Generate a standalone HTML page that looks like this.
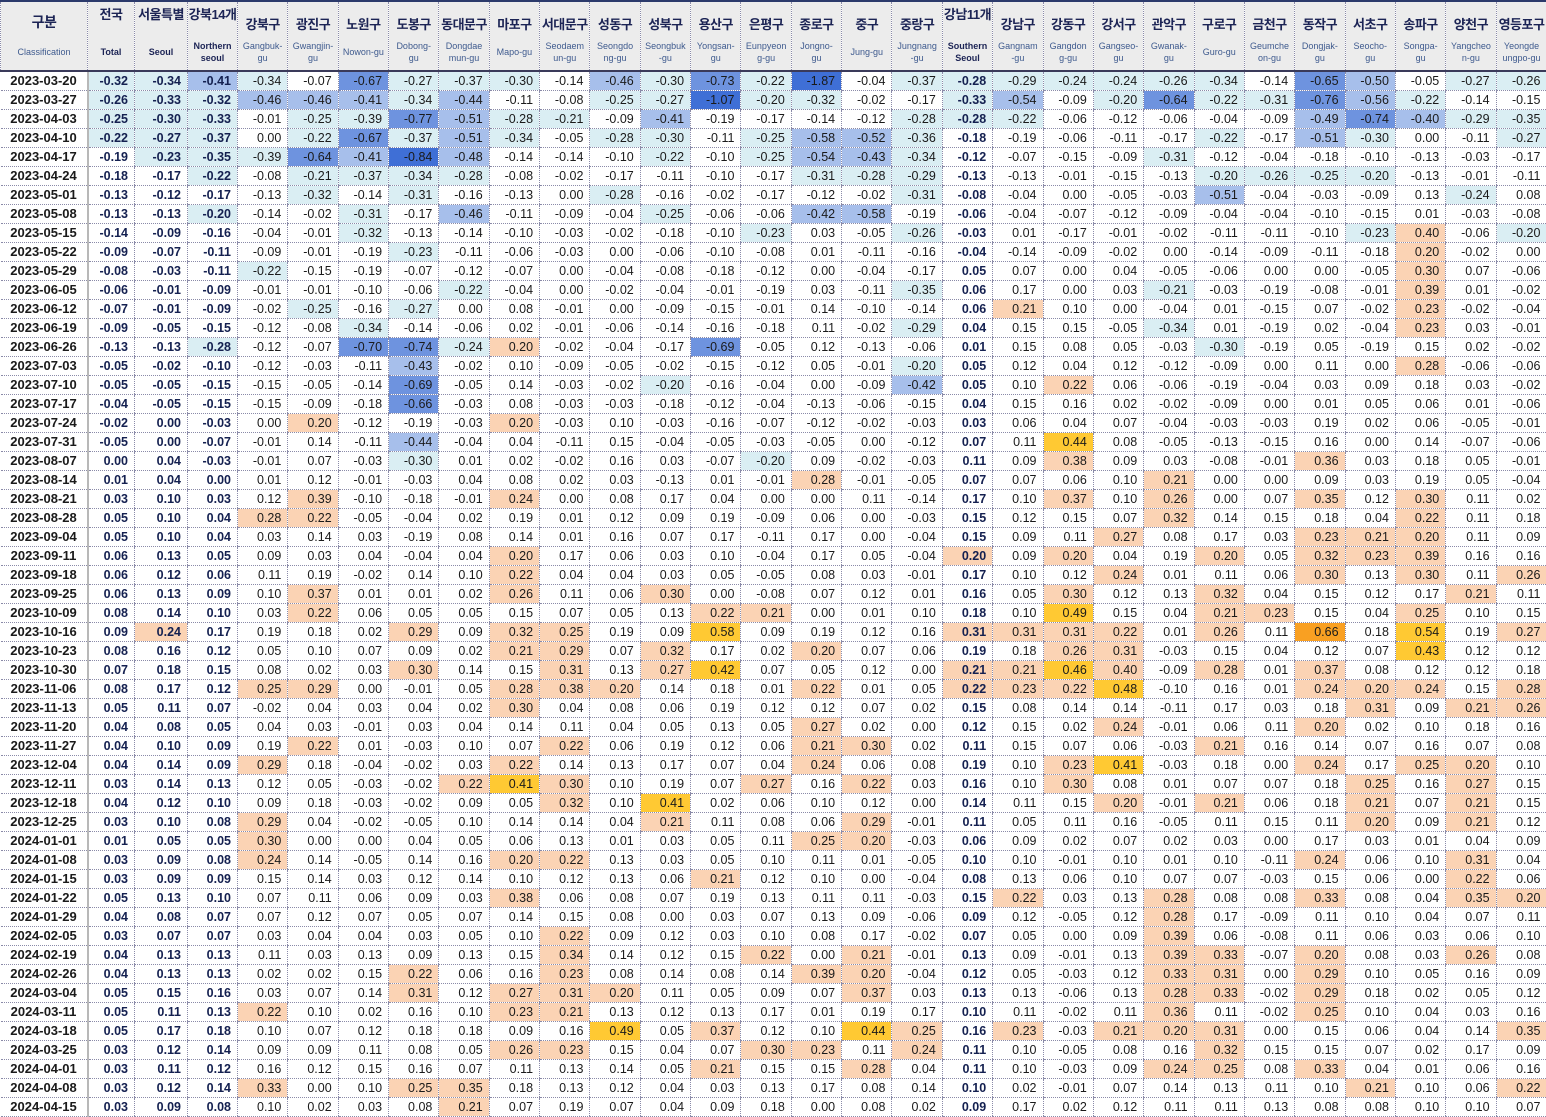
<!DOCTYPE html>
<html><head><meta charset="utf-8">
<style>
html,body{margin:0;padding:0;background:#fff;}
body{width:1546px;height:1116px;overflow:hidden;}
table{border-collapse:collapse;table-layout:fixed;width:1546px;font-family:"Liberation Sans","Noto Sans CJK KR",sans-serif;}
th{background:#ececec;height:68px;padding:0;vertical-align:top;border-left:1px dotted #8a8aa8;border-top:2px solid #2b3a6b;border-bottom:2px solid #3a3a5a;position:relative;}
th .k{font-size:13px;font-weight:bold;color:#1c2455;white-space:nowrap;overflow:hidden;letter-spacing:-0.5px;}
th .e{position:absolute;left:0;right:0;top:36px;height:28px;display:flex;align-items:center;justify-content:center;font-size:9px;line-height:12px;color:#3e5a8e;font-weight:normal;}
th.t .k{margin-top:2px;}
th.d .k{margin-top:12px;}
th.t .e{color:#1c2455;font-weight:bold;}
th:first-child .k{font-size:14px;margin-top:10px;}
th:first-child .e{font-weight:normal;color:#3e5a8e;}
td{height:18px;padding:0 6px 0 0;text-align:right;font-size:12.5px;color:#1a1a1a;border-left:1px dotted #8a8aa8;border-bottom:1px dotted #8a8aa8;white-space:nowrap;overflow:hidden;line-height:18px;}
td.dt{font-weight:bold;text-align:center;padding:0;font-size:13px;color:#1a1a1a;border-right:2px solid #b8b8b8;border-left:none;}
td.b{font-weight:bold;color:#142050;}
</style></head><body>
<table id="t">
<colgroup><col style="width:87px"><col style="width:47px"><col style="width:53px"><col style="width:50px">
<col span="26" style="width:50.35px"></colgroup>
<thead><tr>
<th><div class="k">구분</div><div class="e">Classification</div></th>
<th class="t"><div class="k">전국</div><div class="e">Total</div></th>
<th class="t"><div class="k">서울특별</div><div class="e">Seoul</div></th>
<th class="t"><div class="k">강북14개</div><div class="e">Northern<br>seoul</div></th>
<th class="d"><div class="k">강북구</div><div class="e">Gangbuk-<br>gu</div></th>
<th class="d"><div class="k">광진구</div><div class="e">Gwangjin-<br>gu</div></th>
<th class="d"><div class="k">노원구</div><div class="e">Nowon-gu</div></th>
<th class="d"><div class="k">도봉구</div><div class="e">Dobong-<br>gu</div></th>
<th class="d"><div class="k">동대문구</div><div class="e">Dongdae<br>mun-gu</div></th>
<th class="d"><div class="k">마포구</div><div class="e">Mapo-gu</div></th>
<th class="d"><div class="k">서대문구</div><div class="e">Seodaem<br>un-gu</div></th>
<th class="d"><div class="k">성동구</div><div class="e">Seongdo<br>ng-gu</div></th>
<th class="d"><div class="k">성북구</div><div class="e">Seongbuk<br>-gu</div></th>
<th class="d"><div class="k">용산구</div><div class="e">Yongsan-<br>gu</div></th>
<th class="d"><div class="k">은평구</div><div class="e">Eunpyeon<br>g-gu</div></th>
<th class="d"><div class="k">종로구</div><div class="e">Jongno-<br>gu</div></th>
<th class="d"><div class="k">중구</div><div class="e">Jung-gu</div></th>
<th class="d"><div class="k">중랑구</div><div class="e">Jungnang<br>-gu</div></th>
<th class="t"><div class="k">강남11개</div><div class="e">Southern<br>Seoul</div></th>
<th class="d"><div class="k">강남구</div><div class="e">Gangnam<br>-gu</div></th>
<th class="d"><div class="k">강동구</div><div class="e">Gangdon<br>g-gu</div></th>
<th class="d"><div class="k">강서구</div><div class="e">Gangseo-<br>gu</div></th>
<th class="d"><div class="k">관악구</div><div class="e">Gwanak-<br>gu</div></th>
<th class="d"><div class="k">구로구</div><div class="e">Guro-gu</div></th>
<th class="d"><div class="k">금천구</div><div class="e">Geumche<br>on-gu</div></th>
<th class="d"><div class="k">동작구</div><div class="e">Dongjak-<br>gu</div></th>
<th class="d"><div class="k">서초구</div><div class="e">Seocho-<br>gu</div></th>
<th class="d"><div class="k">송파구</div><div class="e">Songpa-<br>gu</div></th>
<th class="d"><div class="k">양천구</div><div class="e">Yangcheo<br>n-gu</div></th>
<th class="d"><div class="k">영등포구</div><div class="e">Yeongde<br>ungpo-gu</div></th>
</tr></thead>
<tbody>
<tr><td>2023-03-20<td>-0.32<td>-0.34<td>-0.41<td>-0.34<td>-0.07<td>-0.67<td>-0.27<td>-0.37<td>-0.30<td>-0.14<td>-0.46<td>-0.30<td>-0.73<td>-0.22<td>-1.87<td>-0.04<td>-0.37<td>-0.28<td>-0.29<td>-0.24<td>-0.24<td>-0.26<td>-0.34<td>-0.14<td>-0.65<td>-0.50<td>-0.05<td>-0.27<td>-0.26
<tr><td>2023-03-27<td>-0.26<td>-0.33<td>-0.32<td>-0.46<td>-0.46<td>-0.41<td>-0.34<td>-0.44<td>-0.11<td>-0.08<td>-0.25<td>-0.27<td>-1.07<td>-0.20<td>-0.32<td>-0.02<td>-0.17<td>-0.33<td>-0.54<td>-0.09<td>-0.20<td>-0.64<td>-0.22<td>-0.31<td>-0.76<td>-0.56<td>-0.22<td>-0.14<td>-0.15
<tr><td>2023-04-03<td>-0.25<td>-0.30<td>-0.33<td>-0.01<td>-0.25<td>-0.39<td>-0.77<td>-0.51<td>-0.28<td>-0.21<td>-0.09<td>-0.41<td>-0.19<td>-0.17<td>-0.14<td>-0.12<td>-0.28<td>-0.28<td>-0.22<td>-0.06<td>-0.12<td>-0.06<td>-0.04<td>-0.09<td>-0.49<td>-0.74<td>-0.40<td>-0.29<td>-0.35
<tr><td>2023-04-10<td>-0.22<td>-0.27<td>-0.37<td>0.00<td>-0.22<td>-0.67<td>-0.37<td>-0.51<td>-0.34<td>-0.05<td>-0.28<td>-0.30<td>-0.11<td>-0.25<td>-0.58<td>-0.52<td>-0.36<td>-0.18<td>-0.19<td>-0.06<td>-0.11<td>-0.17<td>-0.22<td>-0.17<td>-0.51<td>-0.30<td>0.00<td>-0.11<td>-0.27
<tr><td>2023-04-17<td>-0.19<td>-0.23<td>-0.35<td>-0.39<td>-0.64<td>-0.41<td>-0.84<td>-0.48<td>-0.14<td>-0.14<td>-0.10<td>-0.22<td>-0.10<td>-0.25<td>-0.54<td>-0.43<td>-0.34<td>-0.12<td>-0.07<td>-0.15<td>-0.09<td>-0.31<td>-0.12<td>-0.04<td>-0.18<td>-0.10<td>-0.13<td>-0.03<td>-0.17
<tr><td>2023-04-24<td>-0.18<td>-0.17<td>-0.22<td>-0.08<td>-0.21<td>-0.37<td>-0.34<td>-0.28<td>-0.08<td>-0.02<td>-0.17<td>-0.11<td>-0.10<td>-0.17<td>-0.31<td>-0.28<td>-0.29<td>-0.13<td>-0.13<td>-0.01<td>-0.15<td>-0.13<td>-0.20<td>-0.26<td>-0.25<td>-0.20<td>-0.13<td>-0.01<td>-0.11
<tr><td>2023-05-01<td>-0.13<td>-0.12<td>-0.17<td>-0.13<td>-0.32<td>-0.14<td>-0.31<td>-0.16<td>-0.13<td>0.00<td>-0.28<td>-0.16<td>-0.02<td>-0.17<td>-0.12<td>-0.02<td>-0.31<td>-0.08<td>-0.04<td>0.00<td>-0.05<td>-0.03<td>-0.51<td>-0.04<td>-0.03<td>-0.09<td>0.13<td>-0.24<td>0.08
<tr><td>2023-05-08<td>-0.13<td>-0.13<td>-0.20<td>-0.14<td>-0.02<td>-0.31<td>-0.17<td>-0.46<td>-0.11<td>-0.09<td>-0.04<td>-0.25<td>-0.06<td>-0.06<td>-0.42<td>-0.58<td>-0.19<td>-0.06<td>-0.04<td>-0.07<td>-0.12<td>-0.09<td>-0.04<td>-0.04<td>-0.10<td>-0.15<td>0.01<td>-0.03<td>-0.08
<tr><td>2023-05-15<td>-0.14<td>-0.09<td>-0.16<td>-0.04<td>-0.01<td>-0.32<td>-0.13<td>-0.14<td>-0.10<td>-0.03<td>-0.02<td>-0.18<td>-0.10<td>-0.23<td>0.03<td>-0.05<td>-0.26<td>-0.03<td>0.01<td>-0.17<td>-0.01<td>-0.02<td>-0.11<td>-0.11<td>-0.10<td>-0.23<td>0.40<td>-0.06<td>-0.20
<tr><td>2023-05-22<td>-0.09<td>-0.07<td>-0.11<td>-0.09<td>-0.01<td>-0.19<td>-0.23<td>-0.11<td>-0.06<td>-0.03<td>0.00<td>-0.06<td>-0.10<td>-0.08<td>0.01<td>-0.11<td>-0.16<td>-0.04<td>-0.14<td>-0.09<td>-0.02<td>0.00<td>-0.14<td>-0.09<td>-0.11<td>-0.18<td>0.20<td>-0.02<td>0.00
<tr><td>2023-05-29<td>-0.08<td>-0.03<td>-0.11<td>-0.22<td>-0.15<td>-0.19<td>-0.07<td>-0.12<td>-0.07<td>0.00<td>-0.04<td>-0.08<td>-0.18<td>-0.12<td>0.00<td>-0.04<td>-0.17<td>0.05<td>0.07<td>0.00<td>0.04<td>-0.05<td>-0.06<td>0.00<td>0.00<td>-0.05<td>0.30<td>0.07<td>-0.06
<tr><td>2023-06-05<td>-0.06<td>-0.01<td>-0.09<td>-0.01<td>-0.01<td>-0.10<td>-0.06<td>-0.22<td>-0.04<td>0.00<td>-0.02<td>-0.04<td>-0.01<td>-0.19<td>0.03<td>-0.11<td>-0.35<td>0.06<td>0.17<td>0.00<td>0.03<td>-0.21<td>-0.03<td>-0.19<td>-0.08<td>-0.01<td>0.39<td>0.01<td>-0.02
<tr><td>2023-06-12<td>-0.07<td>-0.01<td>-0.09<td>-0.02<td>-0.25<td>-0.16<td>-0.27<td>0.00<td>0.08<td>-0.01<td>0.00<td>-0.09<td>-0.15<td>-0.01<td>0.14<td>-0.10<td>-0.14<td>0.06<td>0.21<td>0.10<td>0.00<td>-0.04<td>0.01<td>-0.15<td>0.07<td>-0.02<td>0.23<td>-0.02<td>-0.04
<tr><td>2023-06-19<td>-0.09<td>-0.05<td>-0.15<td>-0.12<td>-0.08<td>-0.34<td>-0.14<td>-0.06<td>0.02<td>-0.01<td>-0.06<td>-0.14<td>-0.16<td>-0.18<td>0.11<td>-0.02<td>-0.29<td>0.04<td>0.15<td>0.15<td>-0.05<td>-0.34<td>0.01<td>-0.19<td>0.02<td>-0.04<td>0.23<td>0.03<td>-0.01
<tr><td>2023-06-26<td>-0.13<td>-0.13<td>-0.28<td>-0.12<td>-0.07<td>-0.70<td>-0.74<td>-0.24<td>0.20<td>-0.02<td>-0.04<td>-0.17<td>-0.69<td>-0.05<td>0.12<td>-0.13<td>-0.06<td>0.01<td>0.15<td>0.08<td>0.05<td>-0.03<td>-0.30<td>-0.19<td>0.05<td>-0.19<td>0.15<td>0.02<td>-0.02
<tr><td>2023-07-03<td>-0.05<td>-0.02<td>-0.10<td>-0.12<td>-0.03<td>-0.11<td>-0.43<td>-0.02<td>0.10<td>-0.09<td>-0.05<td>-0.02<td>-0.15<td>-0.12<td>0.05<td>-0.01<td>-0.20<td>0.05<td>0.12<td>0.04<td>0.12<td>-0.12<td>-0.09<td>0.00<td>0.11<td>0.00<td>0.28<td>-0.06<td>-0.06
<tr><td>2023-07-10<td>-0.05<td>-0.05<td>-0.15<td>-0.15<td>-0.05<td>-0.14<td>-0.69<td>-0.05<td>0.14<td>-0.03<td>-0.02<td>-0.20<td>-0.16<td>-0.04<td>0.00<td>-0.09<td>-0.42<td>0.05<td>0.10<td>0.22<td>0.06<td>-0.06<td>-0.19<td>-0.04<td>0.03<td>0.09<td>0.18<td>0.03<td>-0.02
<tr><td>2023-07-17<td>-0.04<td>-0.05<td>-0.15<td>-0.15<td>-0.09<td>-0.18<td>-0.66<td>-0.03<td>0.08<td>-0.03<td>-0.03<td>-0.18<td>-0.12<td>-0.04<td>-0.13<td>-0.06<td>-0.15<td>0.04<td>0.15<td>0.16<td>0.02<td>-0.02<td>-0.09<td>0.00<td>0.01<td>0.05<td>0.06<td>0.01<td>-0.06
<tr><td>2023-07-24<td>-0.02<td>0.00<td>-0.03<td>0.00<td>0.20<td>-0.12<td>-0.19<td>-0.03<td>0.20<td>-0.03<td>0.10<td>-0.03<td>-0.16<td>-0.07<td>-0.12<td>-0.02<td>-0.03<td>0.03<td>0.06<td>0.04<td>0.07<td>-0.04<td>-0.03<td>-0.03<td>0.19<td>0.02<td>0.06<td>-0.05<td>-0.01
<tr><td>2023-07-31<td>-0.05<td>0.00<td>-0.07<td>-0.01<td>0.14<td>-0.11<td>-0.44<td>-0.04<td>0.04<td>-0.11<td>0.15<td>-0.04<td>-0.05<td>-0.03<td>-0.05<td>0.00<td>-0.12<td>0.07<td>0.11<td>0.44<td>0.08<td>-0.05<td>-0.13<td>-0.15<td>0.16<td>0.00<td>0.14<td>-0.07<td>-0.06
<tr><td>2023-08-07<td>0.00<td>0.04<td>-0.03<td>-0.01<td>0.07<td>-0.03<td>-0.30<td>0.01<td>0.02<td>-0.02<td>0.16<td>0.03<td>-0.07<td>-0.20<td>0.09<td>-0.02<td>-0.03<td>0.11<td>0.09<td>0.38<td>0.09<td>0.03<td>-0.08<td>-0.01<td>0.36<td>0.03<td>0.18<td>0.05<td>-0.01
<tr><td>2023-08-14<td>0.01<td>0.04<td>0.00<td>0.01<td>0.12<td>-0.01<td>-0.03<td>0.04<td>0.08<td>0.02<td>0.03<td>-0.13<td>0.01<td>-0.01<td>0.28<td>-0.01<td>-0.05<td>0.07<td>0.07<td>0.06<td>0.10<td>0.21<td>0.00<td>0.00<td>0.09<td>0.03<td>0.19<td>0.05<td>-0.04
<tr><td>2023-08-21<td>0.03<td>0.10<td>0.03<td>0.12<td>0.39<td>-0.10<td>-0.18<td>-0.01<td>0.24<td>0.00<td>0.08<td>0.17<td>0.04<td>0.00<td>0.00<td>0.11<td>-0.14<td>0.17<td>0.10<td>0.37<td>0.10<td>0.26<td>0.00<td>0.07<td>0.35<td>0.12<td>0.30<td>0.11<td>0.02
<tr><td>2023-08-28<td>0.05<td>0.10<td>0.04<td>0.28<td>0.22<td>-0.05<td>-0.04<td>0.02<td>0.19<td>0.01<td>0.12<td>0.09<td>0.19<td>-0.09<td>0.06<td>0.00<td>-0.03<td>0.15<td>0.12<td>0.15<td>0.07<td>0.32<td>0.14<td>0.15<td>0.18<td>0.04<td>0.22<td>0.11<td>0.18
<tr><td>2023-09-04<td>0.05<td>0.10<td>0.04<td>0.03<td>0.14<td>0.03<td>-0.19<td>0.08<td>0.14<td>0.01<td>0.16<td>0.07<td>0.17<td>-0.11<td>0.17<td>0.00<td>-0.04<td>0.15<td>0.09<td>0.11<td>0.27<td>0.08<td>0.17<td>0.03<td>0.23<td>0.21<td>0.20<td>0.11<td>0.09
<tr><td>2023-09-11<td>0.06<td>0.13<td>0.05<td>0.09<td>0.03<td>0.04<td>-0.04<td>0.04<td>0.20<td>0.17<td>0.06<td>0.03<td>0.10<td>-0.04<td>0.17<td>0.05<td>-0.04<td>0.20<td>0.09<td>0.20<td>0.04<td>0.19<td>0.20<td>0.05<td>0.32<td>0.23<td>0.39<td>0.16<td>0.16
<tr><td>2023-09-18<td>0.06<td>0.12<td>0.06<td>0.11<td>0.19<td>-0.02<td>0.14<td>0.10<td>0.22<td>0.04<td>0.04<td>0.03<td>0.05<td>-0.05<td>0.08<td>0.03<td>-0.01<td>0.17<td>0.10<td>0.12<td>0.24<td>0.01<td>0.11<td>0.06<td>0.30<td>0.13<td>0.30<td>0.11<td>0.26
<tr><td>2023-09-25<td>0.06<td>0.13<td>0.09<td>0.10<td>0.37<td>0.01<td>0.01<td>0.02<td>0.26<td>0.11<td>0.06<td>0.30<td>0.00<td>-0.08<td>0.07<td>0.12<td>0.01<td>0.16<td>0.05<td>0.30<td>0.12<td>0.13<td>0.32<td>0.04<td>0.15<td>0.12<td>0.17<td>0.21<td>0.11
<tr><td>2023-10-09<td>0.08<td>0.14<td>0.10<td>0.03<td>0.22<td>0.06<td>0.05<td>0.05<td>0.15<td>0.07<td>0.05<td>0.13<td>0.22<td>0.21<td>0.00<td>0.01<td>0.10<td>0.18<td>0.10<td>0.49<td>0.15<td>0.04<td>0.21<td>0.23<td>0.15<td>0.04<td>0.25<td>0.10<td>0.15
<tr><td>2023-10-16<td>0.09<td>0.24<td>0.17<td>0.19<td>0.18<td>0.02<td>0.29<td>0.09<td>0.32<td>0.25<td>0.19<td>0.09<td>0.58<td>0.09<td>0.19<td>0.12<td>0.16<td>0.31<td>0.31<td>0.31<td>0.22<td>0.01<td>0.26<td>0.11<td>0.66<td>0.18<td>0.54<td>0.19<td>0.27
<tr><td>2023-10-23<td>0.08<td>0.16<td>0.12<td>0.05<td>0.10<td>0.07<td>0.09<td>0.02<td>0.21<td>0.29<td>0.07<td>0.32<td>0.17<td>0.02<td>0.20<td>0.07<td>0.06<td>0.19<td>0.18<td>0.26<td>0.31<td>-0.03<td>0.15<td>0.04<td>0.12<td>0.07<td>0.43<td>0.12<td>0.12
<tr><td>2023-10-30<td>0.07<td>0.18<td>0.15<td>0.08<td>0.02<td>0.03<td>0.30<td>0.14<td>0.15<td>0.31<td>0.13<td>0.27<td>0.42<td>0.07<td>0.05<td>0.12<td>0.00<td>0.21<td>0.21<td>0.46<td>0.40<td>-0.09<td>0.28<td>0.01<td>0.37<td>0.08<td>0.12<td>0.12<td>0.18
<tr><td>2023-11-06<td>0.08<td>0.17<td>0.12<td>0.25<td>0.29<td>0.00<td>-0.01<td>0.05<td>0.28<td>0.38<td>0.20<td>0.14<td>0.18<td>0.01<td>0.22<td>0.01<td>0.05<td>0.22<td>0.23<td>0.22<td>0.48<td>-0.10<td>0.16<td>0.01<td>0.24<td>0.20<td>0.24<td>0.15<td>0.28
<tr><td>2023-11-13<td>0.05<td>0.11<td>0.07<td>-0.02<td>0.04<td>0.03<td>0.04<td>0.02<td>0.30<td>0.04<td>0.08<td>0.06<td>0.19<td>0.12<td>0.12<td>0.07<td>0.02<td>0.15<td>0.08<td>0.14<td>0.14<td>-0.11<td>0.17<td>0.03<td>0.18<td>0.31<td>0.09<td>0.21<td>0.26
<tr><td>2023-11-20<td>0.04<td>0.08<td>0.05<td>0.04<td>0.03<td>-0.01<td>0.03<td>0.04<td>0.14<td>0.11<td>0.04<td>0.05<td>0.13<td>0.05<td>0.27<td>0.02<td>0.00<td>0.12<td>0.15<td>0.02<td>0.24<td>-0.01<td>0.06<td>0.11<td>0.20<td>0.02<td>0.10<td>0.18<td>0.16
<tr><td>2023-11-27<td>0.04<td>0.10<td>0.09<td>0.19<td>0.22<td>0.01<td>-0.03<td>0.10<td>0.07<td>0.22<td>0.06<td>0.19<td>0.12<td>0.06<td>0.21<td>0.30<td>0.02<td>0.11<td>0.15<td>0.07<td>0.06<td>-0.03<td>0.21<td>0.16<td>0.14<td>0.07<td>0.16<td>0.07<td>0.08
<tr><td>2023-12-04<td>0.04<td>0.14<td>0.09<td>0.29<td>0.18<td>-0.04<td>-0.02<td>0.03<td>0.22<td>0.14<td>0.13<td>0.17<td>0.07<td>0.04<td>0.24<td>0.06<td>0.08<td>0.19<td>0.10<td>0.23<td>0.41<td>-0.03<td>0.18<td>0.00<td>0.24<td>0.17<td>0.25<td>0.20<td>0.10
<tr><td>2023-12-11<td>0.03<td>0.14<td>0.13<td>0.12<td>0.05<td>-0.03<td>-0.02<td>0.22<td>0.41<td>0.30<td>0.10<td>0.19<td>0.07<td>0.27<td>0.16<td>0.22<td>0.03<td>0.16<td>0.10<td>0.30<td>0.08<td>0.01<td>0.07<td>0.07<td>0.18<td>0.25<td>0.16<td>0.27<td>0.15
<tr><td>2023-12-18<td>0.04<td>0.12<td>0.10<td>0.09<td>0.18<td>-0.03<td>-0.02<td>0.09<td>0.05<td>0.32<td>0.10<td>0.41<td>0.02<td>0.06<td>0.10<td>0.12<td>0.00<td>0.14<td>0.11<td>0.15<td>0.20<td>-0.01<td>0.21<td>0.06<td>0.18<td>0.21<td>0.07<td>0.21<td>0.15
<tr><td>2023-12-25<td>0.03<td>0.10<td>0.08<td>0.29<td>0.04<td>-0.02<td>-0.05<td>0.10<td>0.14<td>0.14<td>0.04<td>0.21<td>0.11<td>0.08<td>0.06<td>0.29<td>-0.01<td>0.11<td>0.05<td>0.11<td>0.16<td>-0.05<td>0.11<td>0.15<td>0.11<td>0.20<td>0.09<td>0.21<td>0.12
<tr><td>2024-01-01<td>0.01<td>0.05<td>0.05<td>0.30<td>0.00<td>0.00<td>0.04<td>0.05<td>0.06<td>0.13<td>0.01<td>0.03<td>0.05<td>0.11<td>0.25<td>0.20<td>-0.03<td>0.06<td>0.09<td>0.02<td>0.07<td>0.02<td>0.03<td>0.00<td>0.17<td>0.03<td>0.01<td>0.04<td>0.09
<tr><td>2024-01-08<td>0.03<td>0.09<td>0.08<td>0.24<td>0.14<td>-0.05<td>0.14<td>0.16<td>0.20<td>0.22<td>0.13<td>0.03<td>0.05<td>0.10<td>0.11<td>0.01<td>-0.05<td>0.10<td>0.10<td>-0.01<td>0.10<td>0.01<td>0.10<td>-0.11<td>0.24<td>0.06<td>0.10<td>0.31<td>0.04
<tr><td>2024-01-15<td>0.03<td>0.09<td>0.09<td>0.15<td>0.14<td>0.03<td>0.12<td>0.14<td>0.10<td>0.12<td>0.13<td>0.06<td>0.21<td>0.12<td>0.10<td>0.00<td>-0.04<td>0.08<td>0.13<td>0.06<td>0.10<td>0.07<td>0.07<td>-0.03<td>0.15<td>0.06<td>0.00<td>0.22<td>0.06
<tr><td>2024-01-22<td>0.05<td>0.13<td>0.10<td>0.07<td>0.11<td>0.06<td>0.09<td>0.03<td>0.38<td>0.06<td>0.08<td>0.07<td>0.19<td>0.13<td>0.11<td>0.11<td>-0.03<td>0.15<td>0.22<td>0.03<td>0.13<td>0.28<td>0.08<td>0.08<td>0.33<td>0.08<td>0.04<td>0.35<td>0.20
<tr><td>2024-01-29<td>0.04<td>0.08<td>0.07<td>0.07<td>0.12<td>0.07<td>0.05<td>0.07<td>0.14<td>0.15<td>0.08<td>0.00<td>0.03<td>0.07<td>0.13<td>0.09<td>-0.06<td>0.09<td>0.12<td>-0.05<td>0.12<td>0.28<td>0.17<td>-0.09<td>0.11<td>0.10<td>0.04<td>0.07<td>0.11
<tr><td>2024-02-05<td>0.03<td>0.07<td>0.07<td>0.03<td>0.04<td>0.04<td>0.03<td>0.05<td>0.10<td>0.22<td>0.09<td>0.12<td>0.03<td>0.10<td>0.08<td>0.17<td>-0.02<td>0.07<td>0.05<td>0.00<td>0.09<td>0.39<td>0.06<td>-0.08<td>0.11<td>0.06<td>0.03<td>0.06<td>0.10
<tr><td>2024-02-19<td>0.04<td>0.13<td>0.13<td>0.11<td>0.03<td>0.13<td>0.09<td>0.13<td>0.15<td>0.34<td>0.14<td>0.12<td>0.15<td>0.22<td>0.00<td>0.21<td>-0.01<td>0.13<td>0.09<td>-0.01<td>0.13<td>0.39<td>0.33<td>-0.07<td>0.20<td>0.08<td>0.03<td>0.26<td>0.08
<tr><td>2024-02-26<td>0.04<td>0.13<td>0.13<td>0.02<td>0.02<td>0.15<td>0.22<td>0.06<td>0.16<td>0.23<td>0.08<td>0.14<td>0.08<td>0.14<td>0.39<td>0.20<td>-0.04<td>0.12<td>0.05<td>-0.03<td>0.12<td>0.33<td>0.31<td>0.00<td>0.29<td>0.10<td>0.05<td>0.16<td>0.09
<tr><td>2024-03-04<td>0.05<td>0.15<td>0.16<td>0.03<td>0.07<td>0.14<td>0.31<td>0.12<td>0.27<td>0.31<td>0.20<td>0.11<td>0.05<td>0.09<td>0.07<td>0.37<td>0.03<td>0.13<td>0.13<td>-0.06<td>0.13<td>0.28<td>0.33<td>-0.02<td>0.29<td>0.18<td>0.02<td>0.05<td>0.12
<tr><td>2024-03-11<td>0.05<td>0.11<td>0.13<td>0.22<td>0.10<td>0.02<td>0.16<td>0.10<td>0.23<td>0.21<td>0.13<td>0.12<td>0.13<td>0.17<td>0.01<td>0.19<td>0.17<td>0.10<td>0.11<td>-0.02<td>0.11<td>0.36<td>0.11<td>-0.02<td>0.25<td>0.10<td>0.04<td>0.03<td>0.16
<tr><td>2024-03-18<td>0.05<td>0.17<td>0.18<td>0.10<td>0.07<td>0.12<td>0.18<td>0.18<td>0.09<td>0.16<td>0.49<td>0.05<td>0.37<td>0.12<td>0.10<td>0.44<td>0.25<td>0.16<td>0.23<td>-0.03<td>0.21<td>0.20<td>0.31<td>0.00<td>0.15<td>0.06<td>0.04<td>0.14<td>0.35
<tr><td>2024-03-25<td>0.03<td>0.12<td>0.14<td>0.09<td>0.09<td>0.11<td>0.08<td>0.05<td>0.26<td>0.23<td>0.15<td>0.04<td>0.07<td>0.30<td>0.23<td>0.11<td>0.24<td>0.11<td>0.10<td>-0.05<td>0.08<td>0.16<td>0.32<td>0.15<td>0.15<td>0.07<td>0.02<td>0.17<td>0.09
<tr><td>2024-04-01<td>0.03<td>0.11<td>0.12<td>0.16<td>0.12<td>0.15<td>0.16<td>0.07<td>0.11<td>0.13<td>0.14<td>0.05<td>0.21<td>0.15<td>0.15<td>0.28<td>0.04<td>0.11<td>0.10<td>-0.03<td>0.09<td>0.24<td>0.25<td>0.08<td>0.33<td>0.04<td>0.01<td>0.06<td>0.16
<tr><td>2024-04-08<td>0.03<td>0.12<td>0.14<td>0.33<td>0.00<td>0.10<td>0.25<td>0.35<td>0.18<td>0.13<td>0.12<td>0.04<td>0.03<td>0.13<td>0.17<td>0.08<td>0.14<td>0.10<td>0.02<td>-0.01<td>0.07<td>0.14<td>0.13<td>0.11<td>0.10<td>0.21<td>0.10<td>0.06<td>0.22
<tr><td>2024-04-15<td>0.03<td>0.09<td>0.08<td>0.10<td>0.02<td>0.03<td>0.08<td>0.21<td>0.07<td>0.19<td>0.07<td>0.04<td>0.09<td>0.18<td>0.00<td>0.08<td>0.02<td>0.09<td>0.17<td>0.02<td>0.12<td>0.11<td>0.11<td>0.13<td>0.08<td>0.08<td>0.10<td>0.10<td>0.07
</tbody></table>
<script>
var rows=document.querySelectorAll('#t tbody tr');
for(var i=0;i<rows.length;i++){
  var c=rows[i].cells;
  c[0].className='dt';
  for(var j=1;j<c.length;j++){
    var v=parseFloat(c[j].textContent),bg='';
    if(j==1||j==2||j==3||j==18)c[j].className='b';
    if(v<=-0.8)bg='#3f6fd6';else if(v<=-0.6)bg='#6e93df';else if(v<=-0.40)bg='#a7bfeb';else if(v<=-0.195)bg='#daeef3';
    else if(v>=0.6)bg='#f9a022';else if(v>0.40)bg='#ffc933';else if(v>=0.20)bg='#fbd3b4';
    if(bg)c[j].style.background=bg;
  }
}
</script>
</body></html>
